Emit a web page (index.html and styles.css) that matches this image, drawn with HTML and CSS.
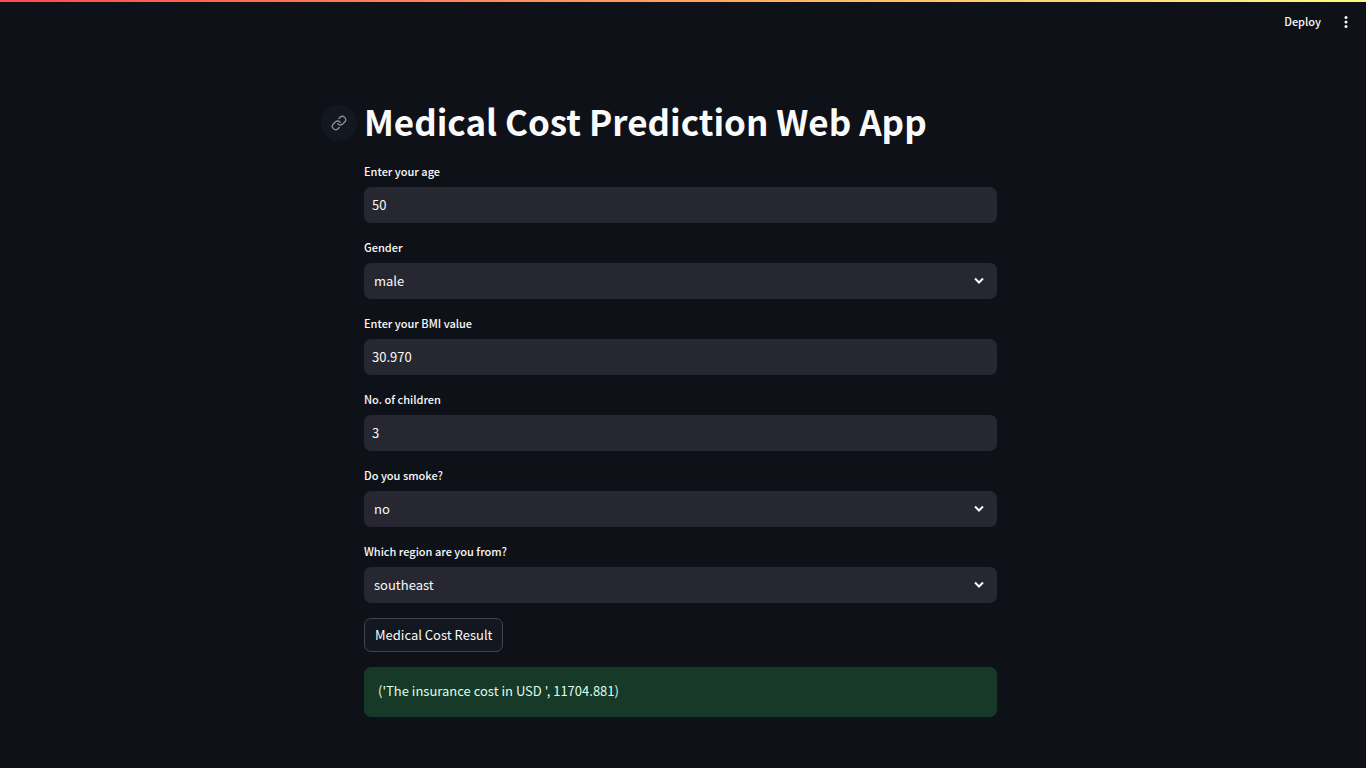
FILE: index.html
```html
<!DOCTYPE html>
<html lang="en">
<head>
<meta charset="utf-8">
<meta name="viewport" content="width=device-width, initial-scale=1">
<title>Medical Cost Prediction Web App</title>
<link rel="stylesheet" href="styles.css">
</head>
<body>
<div class="decoration"></div>
<header class="toolbar">
  <button class="toolbar-button" type="button">Deploy</button>
  <button class="menu-button" type="button" aria-label="Main menu">
    <svg width="18" height="18" viewBox="0 0 18 18" fill="currentColor"><circle cx="9" cy="4.5" r="1.5"/><circle cx="9" cy="9" r="1.5"/><circle cx="9" cy="13.5" r="1.5"/></svg>
  </button>
</header>
<main class="page">
  <div class="heading">
    <a class="anchor" href="#title" aria-label="Link to heading">
      <svg width="16" height="16" viewBox="0 0 24 24" fill="none" stroke="currentColor" stroke-width="2" stroke-linecap="round" stroke-linejoin="round"><path d="M10 13a5 5 0 0 0 7.54.54l3-3a5 5 0 0 0-7.07-7.07l-1.72 1.71"/><path d="M14 11a5 5 0 0 0-7.54-.54l-3 3a5 5 0 0 0 7.07 7.07l1.71-1.71"/></svg>
    </a>
    <h1 class="title" id="title">Medical Cost Prediction Web App</h1>
  </div>
  <form class="form">
    <div class="field">
      <label class="label" for="age">Enter your age</label>
      <input class="control" id="age" type="text" value="50">
    </div>
    <div class="field">
      <label class="label" for="gender">Gender</label>
      <div class="select-box">
        <select class="control select" id="gender"><option>male</option><option>female</option></select>
        <svg class="chevron" width="18" height="18" viewBox="0 0 18 18"><path d="M5 6.5l4 4 4-4"/></svg>
      </div>
    </div>
    <div class="field">
      <label class="label" for="bmi">Enter your BMI value</label>
      <input class="control" id="bmi" type="text" value="30.970">
    </div>
    <div class="field">
      <label class="label" for="children">No. of children</label>
      <input class="control" id="children" type="text" value="3">
    </div>
    <div class="field">
      <label class="label" for="smoke">Do you smoke?</label>
      <div class="select-box">
        <select class="control select" id="smoke"><option>no</option><option>yes</option></select>
        <svg class="chevron" width="18" height="18" viewBox="0 0 18 18"><path d="M5 6.5l4 4 4-4"/></svg>
      </div>
    </div>
    <div class="field">
      <label class="label" for="region">Which region are you from?</label>
      <div class="select-box">
        <select class="control select" id="region"><option>southeast</option><option>southwest</option><option>northeast</option><option>northwest</option></select>
        <svg class="chevron" width="18" height="18" viewBox="0 0 18 18"><path d="M5 6.5l4 4 4-4"/></svg>
      </div>
    </div>
    <button class="submit" type="button">Medical Cost Result</button>
    <output class="alert">('The insurance cost in USD ', 11704.881)</output>
  </form>
</main>
</body>
</html>
```
FILE: styles.css
```css
* {
  box-sizing: border-box;
}

body {
  margin: 0;
  background: #0e1117;
  color: #fafafa;
  font-family: "Source Sans Pro", "Noto Sans CJK SC", sans-serif;
  font-size: 13px;
  line-height: 22px;
}

button,
input,
select {
  font: inherit;
  color: inherit;
}

.decoration {
  height: 2px;
  background: linear-gradient(90deg, #ff4b4b, #fffd80);
}

.toolbar {
  display: flex;
  justify-content: flex-end;
  align-items: center;
  gap: 16px;
  height: 40px;
  padding-right: 11px;
}

.toolbar-button,
.menu-button {
  padding: 0;
  border: 0;
  background: none;
}

.toolbar-button {
  padding-bottom: 3px;
  font-size: 11px;
  font-weight: 500;
}

.menu-button {
  display: flex;
}

.page {
  width: calc(100% - 5px);
  padding: 54px 16px 48px;
}

.heading,
.form {
  max-width: 633px;
  margin: 0 auto;
}

.heading {
  position: relative;
  display: flex;
  align-items: center;
  height: 54px;
}

.anchor {
  position: absolute;
  left: -43px;
  display: flex;
  align-items: center;
  justify-content: center;
  width: 36px;
  height: 36px;
  border-radius: 50%;
  background: #13171f;
  color: #8b8d92;
}

.title {
  margin: 0;
  padding-bottom: 4px;
  font-size: 35px;
  font-weight: 700;
  line-height: 44px;
}

.form {
  display: flex;
  flex-direction: column;
  gap: 15px;
  padding-top: 12px;
}

.field {
  display: flex;
  flex-direction: column;
}

.label {
  height: 25px;
  font-size: 11px;
  font-weight: 500;
  line-height: 18px;
}

.control {
  width: 100%;
  height: 36px;
  padding: 0 8px 2px;
  border: 0;
  border-radius: 7px;
  background: #262730;
  outline: none;
}

.select-box {
  display: grid;
  align-items: center;
}

.select-box > * {
  grid-area: 1 / 1;
}

.select {
  appearance: none;
  padding: 0 10px;
}

.chevron {
  justify-self: end;
  margin-right: 9px;
  fill: none;
  stroke: #fafafa;
  stroke-width: 2;
  pointer-events: none;
}

.submit {
  align-self: flex-start;
  height: 34px;
  padding: 0 10px;
  border: 1px solid #41444c;
  border-radius: 7px;
  background: #131720;
}

.alert {
  padding: 13px 14px 15px;
  border-radius: 7px;
  background: #173928;
  color: #dffde9;
}
```
